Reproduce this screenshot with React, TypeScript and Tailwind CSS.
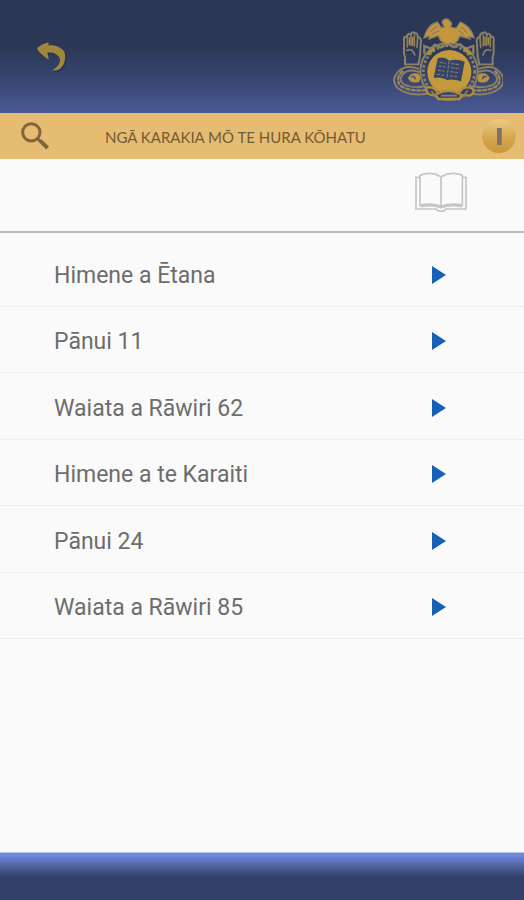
import React from 'react';

const items = [
  'Himene a Ētana',
  'Pānui 11',
  'Waiata a Rāwiri 62',
  'Himene a te Karaiti',
  'Pānui 24',
  'Waiata a Rāwiri 85',
];

function BackIcon() {
  return (
    <svg className="h-[30px] w-[30px]" viewBox="0 0 90 90" fill="none">
      <path
        d="M3 16 Q17 4 29 2 Q38 0 34 10 Q59 8 75 22 Q87 31 84 53 Q80 77 62 84 Q51 88 48 83 Q65 74 69 58 Q70 43 55 36 Q47 31 31 32 Q34 42 36 54 Q28 50 3 26 Q-1 20 3 16Z"
        fill="#22305a"
        transform="translate(3 4)"
      />
      <path
        d="M3 16 Q17 4 29 2 Q38 0 34 10 Q59 8 75 22 Q87 31 84 53 Q80 77 62 84 Q51 88 48 83 Q65 74 69 58 Q70 43 55 36 Q47 31 31 32 Q34 42 36 54 Q28 50 3 26 Q-1 20 3 16Z"
        fill="#9f883c"
      />
    </svg>
  );
}

function SearchIcon() {
  return (
    <svg className="h-[28px] w-[28px]" viewBox="0 0 84 84" fill="none" stroke="#806537">
      <circle cx="31" cy="31" r="26" strokeWidth="9" />
      <path d="M50 50 L60 60" strokeWidth="9" />
      <path d="M57 56 L80 78" strokeWidth="12" />
    </svg>
  );
}

function BookIcon() {
  return (
    <svg className="h-[40px] w-[52px]" viewBox="0 0 156 120" fill="none" stroke="#c5c5c5" strokeWidth="5">
      <path d="M15 16 H3 V111 H64 Q66 118 78 118 Q90 118 92 111 H153 V16 H142" />
      <path d="M78 14 Q48 -3 15 10 V99 Q51 93 78 102 Q108 93 142 99 V10 Q109 -3 78 14 V102" />
      <path d="M16 103 Q53 95 78 106 Q105 95 141 103" strokeWidth="7" />
    </svg>
  );
}

function HandDrawing() {
  return (
    <g stroke="#8b8065" strokeWidth="6" strokeLinejoin="round" strokeLinecap="round">
      <path d="M76 164 V142 L73 130 V84 Q76 77 83 82 V75 Q88 69 94 73 Q99 61 106 71 Q113 67 114 79 L122 85 Q126 92 123 102 L121 138 L116 164" />
      <path d="M83 84 V110 M94 76 V106 M104 76 V108 M114 82 L112 112" strokeWidth="5" />
      <path d="M99 82 V106 M89 84 V104" stroke="#b18c3d" strokeWidth="4" />
      <path d="M82 121 Q99 114 105 135 M77 163 L117 163" strokeWidth="5" />
    </g>
  );
}

function ScrollDrawing() {
  return (
    <g stroke="#8b8065" strokeLinecap="round">
      <path d="M116 176 Q77 163 57 184 Q31 210 54 234 Q87 260 141 251" strokeWidth="6" />
      <path d="M120 186 Q87 174 70 192 Q54 209 72 223 Q98 236 135 229" strokeWidth="6" />
      <path d="M68 184 Q46 205 62 227 Q92 246 138 240" stroke="#9d8657" strokeWidth="7" strokeDasharray="9 8" />
      <path d="M118 192 Q94 184 85 204 Q92 222 118 216 Q126 205 118 192Z" fill="#b9933f" stroke="none" />
      <path d="M96 200 Q104 196 106 206" stroke="#4a5472" strokeWidth="5" />
    </g>
  );
}

function Crest() {
  return (
    <svg className="h-[84px] w-[110px]" viewBox="40 24 330 252" fill="none">
      <HandDrawing />
      <ScrollDrawing />
      <g transform="translate(415 0) scale(-1 1)">
        <HandDrawing />
        <ScrollDrawing />
      </g>
      {/* ring around the book */}
      <circle cx="208" cy="184" r="86" stroke="#8b8065" strokeWidth="6" />
      <circle cx="208" cy="184" r="77" stroke="#8b8065" strokeWidth="8" strokeDasharray="8 6" />
      <path d="M134 132 V108 L153 116 L166 104 L183 112 L202 101 L222 111 L242 103 L256 117 L281 108 V132" stroke="#8b8065" strokeWidth="7" />
      <path d="M142 133 L165 116 M253 116 L274 133" stroke="#b18c3d" strokeWidth="9" />
      {/* eagle with spread wings */}
      <path
        d="M133 84 Q142 46 173 36 L185 53 L194 51 L187 36 Q193 24 206 28 L216 40 L213 52 L230 55 L242 36 Q273 48 283 83 L267 79 L271 87 L252 81 L240 78 L234 92 L222 102 L212 98 L203 104 L192 98 L182 90 L176 77 L162 82 L148 87 L150 76 Z"
        fill="#c4973c"
        stroke="#8b8065"
        strokeWidth="4"
      />
      <path d="M151 65 L172 49 M156 73 L179 61 M244 50 L262 68 M236 59 L252 75" stroke="#8b8065" strokeWidth="4" />
      <circle cx="209" cy="186" r="66" fill="#c4993c" />
      <path d="M174 145 Q194 137 209 152 Q230 145 255 155 L244 214 Q218 205 203 210 Q181 200 162 204 Z" fill="#35446b" />
      <path d="M208 153 L202 205 M180 157 L199 160 M177 168 L197 171 M175 181 L194 184 M171 193 L194 196 M215 161 L241 164 M214 173 L238 176 M212 185 L237 188 M210 198 L232 200" stroke="#8b8065" strokeWidth="3" strokeDasharray="10 3" />
      {/* ribbon */}
      <path d="M139 233 Q166 227 174 250 Q211 235 239 251 Q246 226 276 234 Q291 246 270 257 L246 255 L240 267 H176 L167 254 Q141 260 139 233Z" fill="#35446b" stroke="#b18c3d" strokeWidth="7" />
      <path d="M155 242 L166 258 M184 257 H232 M252 257 L264 241" stroke="#8b8065" strokeWidth="5" />
    </svg>
  );
}

export default function App() {
  return (
    <div className="flex min-h-screen flex-col bg-[#fafafa] font-['Roboto',sans-serif]">
      <header className="flex h-[113px] items-start justify-between bg-linear-to-b from-[#2b3755] from-40% via-[#35426b] via-65% to-[#4a5a96] pt-[18px] pr-[21px] pl-[37px]">
        <button type="button" aria-label="Back" className="mt-6">
          <BackIcon />
        </button>
        <Crest />
      </header>

      {/* title bar */}
      <div className="flex h-[46px] items-center bg-[#e6bc73] pr-2 pl-[21px]">
        <button type="button" aria-label="Search" className="w-[84px]">
          <SearchIcon />
        </button>
        <h1 className="flex-1 pt-0.5 font-['Lato',sans-serif] text-[15px] leading-6 text-[#735b35]">
          NGĀ KARAKIA MŌ TE HURA KŌHATU
        </h1>
        <button
          type="button"
          aria-label="Information"
          className="flex h-[34px] w-[34px] items-center justify-center rounded-full bg-linear-to-b from-[#ebcb88] via-[#d8aa50] to-[#c7953c]"
        >
          <span className="h-[17px] w-[5px] border-r border-[#a77e45] bg-[#80706a]" />
        </button>
      </div>

      <div className="flex h-[74px] items-start justify-end border-b-2 border-[#bcbcbc] pt-[13px] pr-[57px]">
        <button type="button" aria-label="Open book">
          <BookIcon />
        </button>
      </div>

      <main className="flex-1 pt-[7px]">
        <ul className="grid h-[399px] auto-rows-fr">
          {items.map((item) => (
            <li key={item} className="border-b border-[#efefef]">
              <button
                type="button"
                className="flex h-full w-full items-center justify-between pt-1 pr-[78px] pl-[54px] text-left text-[23px] text-[#6d6d6d]"
              >
                <span className="pt-0.5 leading-8">{item}</span>
                <svg className="h-[18px] w-[14px]" viewBox="0 0 14 18">
                  <path d="M0 0 L14 9 L0 18Z" fill="#1761b5" />
                </svg>
              </button>
            </li>
          ))}
        </ul>
      </main>

      <footer className="h-12 border-t border-[#b4c0ee] bg-linear-to-b from-[#7088dc] from-5% via-[#33406a] via-50% to-[#33406a]" />
    </div>
  );
}
